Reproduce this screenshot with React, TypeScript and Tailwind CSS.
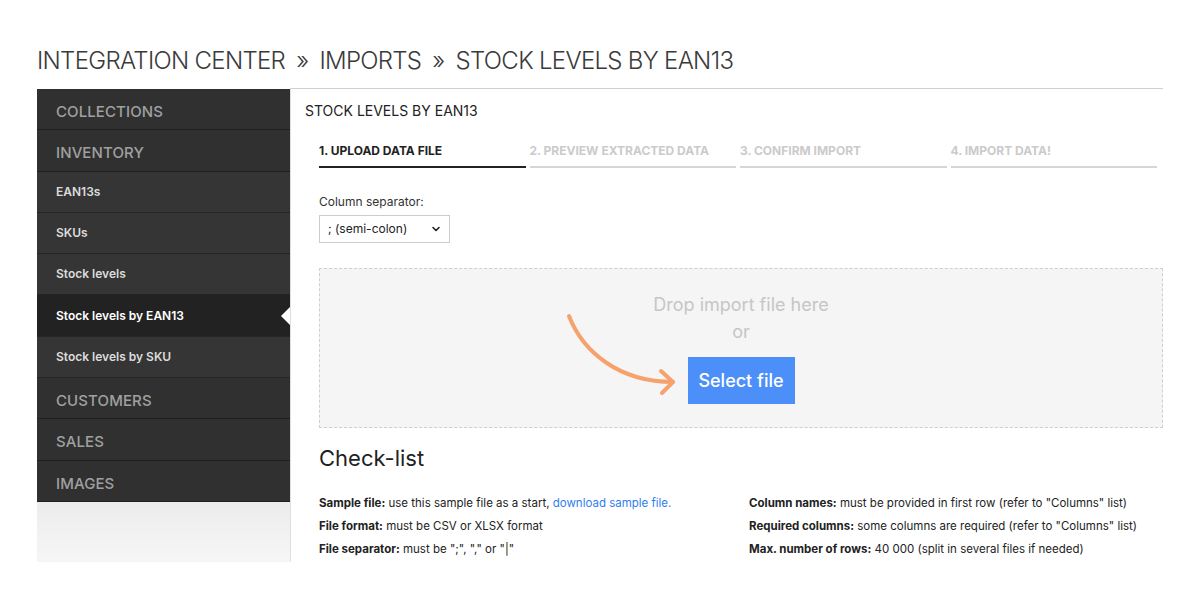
import React from "react";

const F = { fontFamily: 'Inter, "Liberation Sans", sans-serif' };

function CatItem({ label }: { label: string }) {
  return (
    <div className="h-[41.3px] flex items-center pl-[19px] pt-[6px] bg-[#303030] border-b border-[#1f1f1f] text-[15px] font-medium text-[#a0a0a0] tracking-[0.1px]">
      {label}
    </div>
  );
}

function SubItem({ label, active }: { label: string; active?: boolean }) {
  return (
    <div
      className={
        "relative h-[41.3px] flex items-center pl-[19px] border-b border-[#252525] text-[12px] font-semibold " +
        (active ? "bg-[#222222] text-white" : "bg-[#353535] text-[#dcdcdc]")
      }
    >
      {label}
      {active && (
        <span className="absolute right-0 top-1/2 -translate-y-1/2 w-0 h-0 border-y-[9px] border-y-transparent border-r-[9px] border-r-white" />
      )}
    </div>
  );
}

export default function App() {
  const tabs = ["1. UPLOAD DATA FILE", "2. PREVIEW EXTRACTED DATA", "3. CONFIRM IMPORT", "4. IMPORT DATA!"];
  return (
    <div className="w-[1200px] h-[600px] bg-white overflow-hidden" style={F}>
      <div className="px-[37px] pt-[46px]">
        <div className="text-[24px] font-light text-[#3a3a3a] leading-[30px] tracking-[-0.7px] whitespace-nowrap">
          INTEGRATION CENTER <span className="mx-[5px]">»</span> IMPORTS <span className="mx-[5px]">»</span> STOCK LEVELS BY EAN13
        </div>
        <div className="mt-[12px] flex w-[1126px]">
          <div className="w-[253px] shrink-0 pt-px">
            <CatItem label="COLLECTIONS" />
            <CatItem label="INVENTORY" />
            <SubItem label="EAN13s" />
            <SubItem label="SKUs" />
            <SubItem label="Stock levels" />
            <SubItem label="Stock levels by EAN13" active />
            <SubItem label="Stock levels by SKU" />
            <CatItem label="CUSTOMERS" />
            <CatItem label="SALES" />
            <CatItem label="IMAGES" />
            <div className="h-[60px] bg-gradient-to-b from-[#ececec] to-[#f6f6f6]" />
          </div>
          <div className="flex-1 border-t border-[#cfcfcf] border-l border-l-[#dedede] pl-[14px]">
            <div className="pt-[13px] text-[14px] text-[#222] leading-[18px]">STOCK LEVELS BY EAN13</div>
            <div className="pl-[14px]">
              <div className="mt-[23px] flex gap-[4px] w-[838px]">
                {tabs.map((t, i) => (
                  <div
                    key={t}
                    className={
                      "flex-1 pb-[7px] text-[12px] font-bold leading-[16px] border-b-2 " +
                      (i === 0 ? "text-[#222] border-[#222]" : "text-[#cbcbcb] border-[#d6d6d6]")
                    }
                  >
                    {t}
                  </div>
                ))}
              </div>
              <div className="mt-[26px] text-[12px] text-[#333] leading-[16px]">Column separator:</div>
              <div className="mt-[5px] w-[131px] h-[28px] border border-[#cccccc] flex items-center justify-between px-[8px] text-[12px] text-[#222]">
                <span>; (semi-colon)</span>
                <svg width="10" height="10" viewBox="0 0 10 10">
                  <path d="M2 3.5 L5 6.5 L8 3.5" fill="none" stroke="#222" strokeWidth="1.6" strokeLinecap="round" strokeLinejoin="round" />
                </svg>
              </div>
              <div className="relative mt-[25px] h-[160px] border border-dashed border-[#cfcfcf] bg-[#f5f5f5] flex flex-col items-center pt-[23px]">
                <div className="text-[18px] text-[#c6c6c6] leading-[26px]">Drop import file here</div>
                <div className="text-[18px] text-[#c6c6c6] leading-[26px] mt-[1px]">or</div>
                <div className="mt-[12px] w-[107px] h-[47px] bg-[#4d8ff8] text-white text-[18px] font-medium flex items-center justify-center">
                  Select file
                </div>
                <svg className="absolute left-[241px] top-[41px]" width="120" height="90" viewBox="0 0 120 90">
                  <path d="M8 6 C 22 42, 58 72, 112 72" fill="none" stroke="#f6a26c" strokeWidth="4" strokeLinecap="round" />
                  <path d="M100 61 L112 72 L101 83" fill="none" stroke="#f6a26c" strokeWidth="4" strokeLinecap="round" strokeLinejoin="round" />
                </svg>
              </div>
              <div className="mt-[16px] text-[22px] text-[#222] leading-[28px]">Check-list</div>
              <div className="mt-[20px] grid grid-cols-2 text-[11.5px] text-[#222] leading-[23px]">
                <div>
                  <div><b className="font-bold">Sample file:</b> use this sample file as a start, <span className="text-[#2f7df0]">download sample file.</span></div>
                  <div><b className="font-bold">File format:</b> must be CSV or XLSX format</div>
                  <div><b className="font-bold">File separator:</b> must be ";", "," or "|"</div>
                </div>
                <div className="pl-[8px]">
                  <div><b className="font-bold">Column names:</b> must be provided in first row (refer to "Columns" list)</div>
                  <div><b className="font-bold">Required columns:</b> some columns are required (refer to "Columns" list)</div>
                  <div><b className="font-bold">Max. number of rows:</b> 40 000 (split in several files if needed)</div>
                </div>
              </div>
            </div>
          </div>
        </div>
      </div>
    </div>
  );
}
